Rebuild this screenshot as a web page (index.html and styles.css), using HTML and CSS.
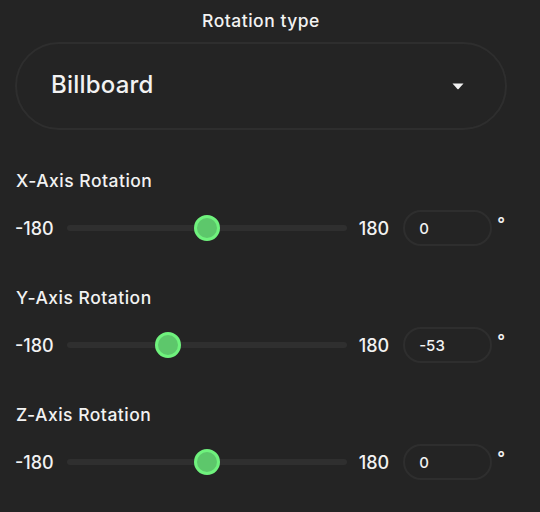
FILE: index.html
```html
<!DOCTYPE html>
<html>
<head>
<meta charset="utf-8">
<link rel="stylesheet" href="styles.css">
</head>
<body>
<div class="panel">
  <div class="heading">Rotation type</div>
  <div class="select">
    <span class="select-value">Billboard</span>
    <svg class="caret" width="12" height="7" viewBox="0 0 12 7"><path d="M0.5 0.5 H11.5 L6.6 5.9 Q6 6.5 5.4 5.9 Z" fill="#f2f2f2"/></svg>
  </div>

  <div class="axis">
    <div class="axis-label">X-Axis Rotation</div>
    <div class="axis-row">
      <span class="bound">-180</span>
      <div class="slider"><div class="track"></div><div class="thumb" style="left:140px"></div></div>
      <span class="bound">180</span>
      <div class="num">0</div>
      <span class="deg">°</span>
    </div>
  </div>

  <div class="axis">
    <div class="axis-label">Y-Axis Rotation</div>
    <div class="axis-row">
      <span class="bound">-180</span>
      <div class="slider"><div class="track"></div><div class="thumb" style="left:101px"></div></div>
      <span class="bound">180</span>
      <div class="num">-53</div>
      <span class="deg">°</span>
    </div>
  </div>

  <div class="axis">
    <div class="axis-label">Z-Axis Rotation</div>
    <div class="axis-row">
      <span class="bound">-180</span>
      <div class="slider"><div class="track"></div><div class="thumb" style="left:140px"></div></div>
      <span class="bound">180</span>
      <div class="num">0</div>
      <span class="deg">°</span>
    </div>
  </div>
</div>
</body>
</html>
```

FILE: styles.css
```css
html, body {
  margin: 0;
  padding: 0;
  background: #242424;
  height: 100%;
}
body {
  font-family: Inter, "Noto Sans", sans-serif;
  color: #f2f2f2;
}
.panel {
  width: 492px;
  margin-left: 15px;
  padding-top: 11px;
}
.heading {
  text-align: center;
  font-size: 17.5px;
  letter-spacing: 0.5px;
  font-weight: 500;
  line-height: 20px;
}
.select {
  margin-top: 11px;
  height: 88px;
  box-sizing: border-box;
  border: 2px solid #2e2e2e;
  border-radius: 44px;
  display: flex;
  align-items: center;
  padding: 0 41px 3px 34px;
}
.select-value {
  flex: 1;
  font-size: 24px;
  letter-spacing: 0.2px;
  font-weight: 500;
}
.caret {
  display: block;
  margin-top: 3px;
}
.axis {
  margin-top: 41px;
}
.axis + .axis {
  margin-top: 42px;
}
.axis-label {
  margin-left: 1px;
  font-size: 17.5px;
  letter-spacing: 0.5px;
  font-weight: 500;
  line-height: 20px;
}
.axis-row {
  margin-top: 19px;
  display: flex;
  align-items: center;
  height: 36px;
}
.bound {
  font-size: 18px;
  font-weight: 500;
}
.slider {
  position: relative;
  width: 280px;
  height: 26px;
  margin: 0 12px 0 13px;
}
.track {
  position: absolute;
  left: 0;
  right: 0;
  top: 10px;
  height: 6px;
  border-radius: 3px;
  background: #2f2f2f;
}
.thumb {
  position: absolute;
  top: 0;
  width: 26px;
  height: 26px;
  margin-left: -13px;
  box-sizing: border-box;
  border-radius: 50%;
  background: #5dc76b;
  border: 3.5px solid #6ff27d;
}
.num {
  margin-left: 14px;
  width: 89px;
  height: 36px;
  box-sizing: border-box;
  border: 2px solid #2e2e2e;
  border-radius: 18px;
  display: flex;
  align-items: center;
  padding-left: 14px;
  font-size: 15px;
  font-weight: 500;
}
.deg {
  margin-left: 5px;
  font-size: 17px;
  font-weight: 600;
  align-self: flex-start;
  line-height: 28px;
}
```
